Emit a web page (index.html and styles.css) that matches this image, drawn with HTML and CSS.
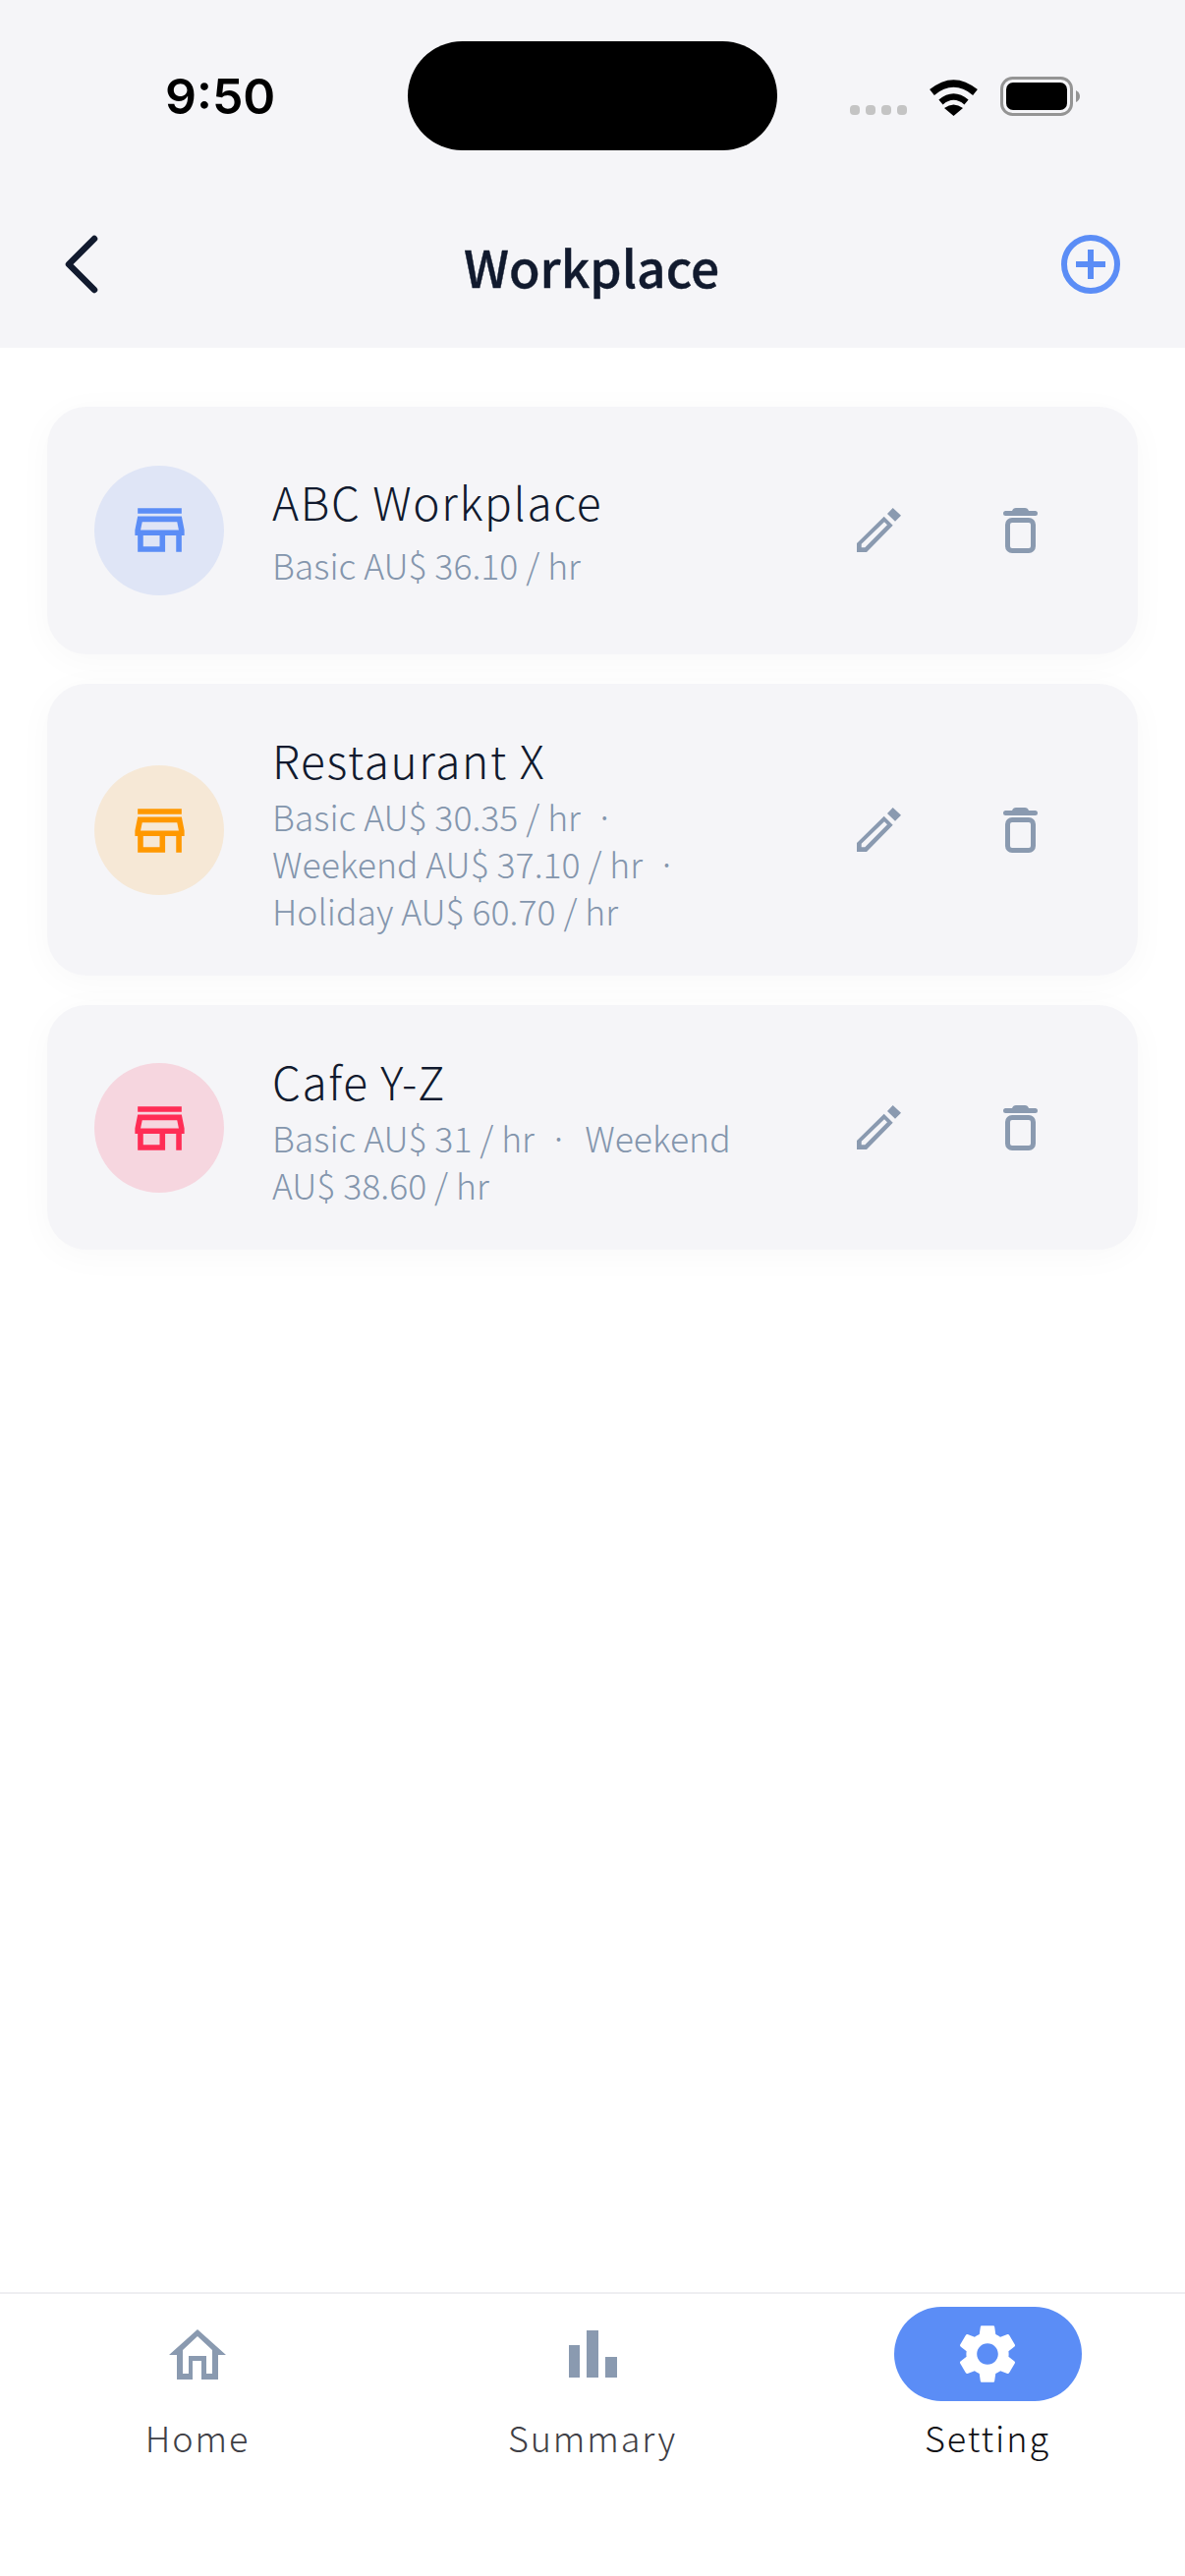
FILE: index.html
```html
<!DOCTYPE html>
<html lang="en">
<head>
  <meta charset="UTF-8" />
  <meta name="viewport" content="width=device-width, initial-scale=1.0" />
  <title>Workplace</title>
  <link rel="stylesheet" href="styles.css">
</head>
<body>
  <div id="app">
    <header id="top">
      <div id="status">
        <span class="time">9:50</span>
        <div class="island"></div>
        <div class="status-icons">
          <div class="signal"><i></i><i></i><i></i><i></i></div>
          <svg class="wifi" width="51" height="38" viewBox="0 0 51 38">
            <path d="M3.5 14 Q25.5 -4 47.5 14" fill="none" stroke="#000" stroke-width="7.5"/>
            <path d="M12.5 24 Q25.5 13 38.5 24" fill="none" stroke="#000" stroke-width="6.5"/>
            <path d="M25.5 38 L16 30 Q25.5 23 35 30 Z" fill="#000"/>
          </svg>
          <svg class="battery" width="82" height="40" viewBox="0 0 82 40">
            <rect x="1.5" y="1.5" width="71" height="37" rx="11" fill="none" stroke="#949494" stroke-width="3"/>
            <rect x="6" y="6" width="62" height="28" rx="7" fill="#000"/>
            <path d="M77 14 Q81 16 81 20 Q81 24 77 26 Z" fill="#949494"/>
          </svg>
        </div>
      </div>
      <div id="navbar">
        <div class="nav-side">
          <svg width="36" height="60" viewBox="0 0 36 60">
            <path d="M32 4 L6 30 L32 56" fill="none" stroke="#111a2e" stroke-width="6.5" stroke-linecap="round" stroke-linejoin="round"/>
          </svg>
        </div>
        <h1>Workplace</h1>
        <div class="nav-side right">
          <svg width="60" height="60" viewBox="0 0 60 60">
            <circle cx="30" cy="30" r="27" fill="none" stroke="#5b8df6" stroke-width="6"/>
            <path d="M30 15 V45 M15 30 H45" stroke="#5b8df6" stroke-width="6"/>
          </svg>
        </div>
      </div>
    </header>

    <main id="list">
      <div class="card single">
        <div class="badge blue">
          <svg width="67" height="67" viewBox="0 0 24 24"><path d="M20 4H4v2h16V4zm1 10v-2l-1-5H4l-1 5v2h1v6h10v-6h4v6h2v-6h1zm-9 4H6v-4h6v4zm-6.96-6l.6-3h12.72l.6 3H5.04z"/></svg>
        </div>
        <div class="info">
          <div class="name">ABC Workplace</div>
          <div class="rates">Basic AU$ 36.10 / hr</div>
        </div>
        <div class="actions">
          <button class="act"><svg width="45" height="46" viewBox="0 0 45 46"><path fill-rule="evenodd" d="M36.7 0 L45 7.7 L39 13.7 L31 6 Z M27.7 8.7 L36.7 17.7 L10 45 H0 V36 Z M28 14.3 L4.7 36.7 V40.3 H8.3 L31 17.3 Z"/></svg></button>
          <button class="act"><svg width="35" height="46" viewBox="0 0 35 46"><path d="M9 3 Q10 0 13 0 H22 Q25 0 26 3 H32.500 A2.500 2.500 0 0 1 32.500 8 H2.500 A2.500 2.500 0 0 1 2.500 3 Z"/><rect x="4.500" y="12.500" width="26" height="31" rx="4.500" fill="none" stroke="#8a9ab0" stroke-width="5"/></svg></button>
        </div>
      </div>

      <div class="card">
        <div class="badge orange">
          <svg width="67" height="67" viewBox="0 0 24 24"><path d="M20 4H4v2h16V4zm1 10v-2l-1-5H4l-1 5v2h1v6h10v-6h4v6h2v-6h1zm-9 4H6v-4h6v4zm-6.96-6l.6-3h12.72l.6 3H5.04z"/></svg>
        </div>
        <div class="info">
          <div class="name">Restaurant X</div>
          <div class="rates">Basic AU$ 30.35 / hr<span class="dot">·</span><br>Weekend AU$ 37.10 / hr<span class="dot">·</span><br>Holiday AU$ 60.70 / hr</div>
        </div>
        <div class="actions">
          <button class="act"><svg width="45" height="46" viewBox="0 0 45 46"><path fill-rule="evenodd" d="M36.7 0 L45 7.7 L39 13.7 L31 6 Z M27.7 8.7 L36.7 17.7 L10 45 H0 V36 Z M28 14.3 L4.7 36.7 V40.3 H8.3 L31 17.3 Z"/></svg></button>
          <button class="act"><svg width="35" height="46" viewBox="0 0 35 46"><path d="M9 3 Q10 0 13 0 H22 Q25 0 26 3 H32.500 A2.500 2.500 0 0 1 32.500 8 H2.500 A2.500 2.500 0 0 1 2.500 3 Z"/><rect x="4.500" y="12.500" width="26" height="31" rx="4.500" fill="none" stroke="#8a9ab0" stroke-width="5"/></svg></button>
        </div>
      </div>

      <div class="card">
        <div class="badge red">
          <svg width="67" height="67" viewBox="0 0 24 24"><path d="M20 4H4v2h16V4zm1 10v-2l-1-5H4l-1 5v2h1v6h10v-6h4v6h2v-6h1zm-9 4H6v-4h6v4zm-6.96-6l.6-3h12.72l.6 3H5.04z"/></svg>
        </div>
        <div class="info">
          <div class="name">Cafe Y-Z</div>
          <div class="rates">Basic AU$ 31 / hr<span class="dot">·</span>Weekend<br>AU$ 38.60 / hr</div>
        </div>
        <div class="actions">
          <button class="act"><svg width="45" height="46" viewBox="0 0 45 46"><path fill-rule="evenodd" d="M36.7 0 L45 7.7 L39 13.7 L31 6 Z M27.7 8.7 L36.7 17.7 L10 45 H0 V36 Z M28 14.3 L4.7 36.7 V40.3 H8.3 L31 17.3 Z"/></svg></button>
          <button class="act"><svg width="35" height="46" viewBox="0 0 35 46"><path d="M9 3 Q10 0 13 0 H22 Q25 0 26 3 H32.500 A2.500 2.500 0 0 1 32.500 8 H2.500 A2.500 2.500 0 0 1 2.500 3 Z"/><rect x="4.500" y="12.500" width="26" height="31" rx="4.500" fill="none" stroke="#8a9ab0" stroke-width="5"/></svg></button>
        </div>
      </div>
    </main>

    <nav id="tabs">
      <div class="tab">
        <div class="tab-icon">
          <svg width="58" height="51" viewBox="0 0 58 51"><path fill="#8a9ab0" fill-rule="evenodd" d="M29 0 L58 26 H50 V51 H33 V32 H24 V51 H8 V26 H0 Z M29 7 L14 21 V45 H20 V27 H38 V45 H44 V21 Z"/></svg>
        </div>
        <span class="label">Home</span>
      </div>
      <div class="tab">
        <div class="tab-icon">
          <div class="bars"><i class="b1"></i><i class="b2"></i><i class="b3"></i></div>
        </div>
        <span class="label">Summary</span>
      </div>
      <div class="tab active">
        <div class="tab-icon">
          <svg width="72" height="72" viewBox="0 0 24 24"><path fill="#fff" d="M19.14,12.94c0.04-0.3,0.06-0.61,0.06-0.94c0-0.32-0.02-0.64-0.07-0.94l2.03-1.58c0.18-0.14,0.23-0.41,0.12-0.61 l-1.92-3.32c-0.12-0.22-0.37-0.29-0.59-0.22l-2.39,0.96c-0.5-0.38-1.03-0.7-1.62-0.94L14.4,2.81c-0.04-0.24-0.24-0.41-0.48-0.41 h-3.84c-0.24,0-0.43,0.17-0.47,0.41L9.25,5.35C8.66,5.59,8.12,5.92,7.63,6.29L5.24,5.33c-0.22-0.08-0.47,0-0.59,0.22L2.74,8.87 C2.62,9.08,2.66,9.34,2.86,9.48l2.03,1.58C4.84,11.36,4.8,11.69,4.8,12s0.02,0.64,0.07,0.94l-2.03,1.58 c-0.18,0.14-0.23,0.41-0.12,0.61l1.92,3.32c0.12,0.22,0.37,0.29,0.59,0.22l2.39-0.96c0.5,0.38,1.03,0.7,1.62,0.94l0.36,2.54 c0.05,0.24,0.24,0.41,0.48,0.41h3.84c0.24,0,0.44-0.17,0.47-0.41l0.36-2.54c0.59-0.24,1.13-0.56,1.62-0.94l2.39,0.96 c0.22,0.08,0.47,0,0.59-0.22l1.92-3.32c0.12-0.22,0.07-0.47-0.12-0.61L19.14,12.94z M12,15.6c-1.98,0-3.6-1.62-3.6-3.6 s1.62-3.6,3.6-3.6s3.6,1.62,3.6,3.6S13.98,15.6,12,15.6z"/></svg>
        </div>
        <span class="label">Setting</span>
      </div>
    </nav>
  </div>
</body>
</html>
```

FILE: styles.css
```css
body {
  margin: 0;
  padding: 0;
  background: #fff;
  font-family: "Noto Sans CJK JP", "Noto Sans", sans-serif;
}

#app {
  display: flex;
  flex-direction: column;
  height: 2622px;
  overflow: hidden;
}

/* top area */
#top {
  background: #f5f5f8;
  height: 354px;
}

#status {
  display: flex;
  align-items: center;
  height: 111px;
  padding-top: 42px;
}

.time {
  width: 109px;
  margin-left: 168px;
  margin-right: 138px;
  font-family: Inter, sans-serif;
  font-size: 50px;
  font-weight: 600;
  line-height: 60px;
  color: #000;
  white-space: nowrap;
}

.island {
  width: 376px;
  height: 111px;
  background: #000;
  border-radius: 56px;
}

.status-icons {
  display: flex;
  align-items: flex-end;
  margin-left: 74px;
  margin-top: 1px;
}

.signal {
  display: flex;
  gap: 6px;
  margin-right: 22px;
  margin-bottom: 1px;
}

.signal i {
  width: 10px;
  height: 10px;
  border-radius: 4px;
  background: #c4c4c4;
}

.wifi {
  margin-right: 22px;
}

#navbar {
  display: flex;
  align-items: center;
  justify-content: space-between;
  height: 60px;
  margin-top: 86px;
  padding: 0 66px 0 64px;
}

.nav-side {
  display: flex;
  width: 80px;
}

.nav-side.right {
  justify-content: flex-end;
}

#navbar h1 {
  margin: 4px 0 0 0;
  font-size: 51.5px;
  font-weight: 500;
  line-height: 60px;
  color: #111a2e;
  -webkit-text-stroke: 0.4px #111a2e;
}

/* cards */
#list {
  flex: 1;
  display: flex;
  flex-direction: column;
  gap: 30px;
  padding: 60px 48px 0;
}

.card {
  display: flex;
  align-items: center;
  padding: 45px 84px 44px 48px;
  background: #f5f5f8;
  border-radius: 40px;
  box-shadow: 0 6px 36px rgba(0, 0, 0, 0.03);
}

.card.single {
  min-height: 252px;
  padding-top: 44px;
  padding-bottom: 45px;
  box-sizing: border-box;
}

.badge {
  flex: none;
  display: flex;
  align-items: center;
  justify-content: center;
  width: 132px;
  height: 132px;
  border-radius: 50%;
}

.badge.blue { background: #dfe5f6; fill: #5b8df6; }
.badge.orange { background: #f6e8d6; fill: #ff9800; }
.badge.red { background: #f6d6df; fill: #ff2d55; }

.info {
  width: 490px;
  margin-left: 49px;
  margin-right: auto;
}

.name {
  margin-top: 2px;
  font-size: 46px;
  font-weight: 300;
  line-height: 60px;
  letter-spacing: 1.65px;
  color: #111a2e;
}

.rates {
  margin-top: 4px;
  margin-bottom: -2px;
  font-size: 35.6px;
  font-weight: 300;
  line-height: 48px;
  color: #8496ad;
}

.single .info {
  margin-bottom: 4px;
}

.single .rates {
  margin-top: 11px;
}

.dot {
  margin: 0 17px 0 15px;
}

.actions {
  display: flex;
  gap: 72px;
}

.act {
  display: flex;
  align-items: center;
  justify-content: center;
  width: 72px;
  height: 72px;
  padding: 0;
  border: none;
  background: none;
  fill: #8a9ab0;
}

/* bottom tabs */
#tabs {
  display: grid;
  grid-template-columns: repeat(3, 1fr);
  height: 289px;
  padding-top: 13px;
  box-sizing: border-box;
  border-top: 2px solid #eeeef1;
}

.tab {
  display: flex;
  flex-direction: column;
  align-items: center;
}

.tab-icon {
  display: flex;
  align-items: center;
  justify-content: center;
  width: 191px;
  height: 96px;
  border-radius: 48px;
}

.tab.active .tab-icon {
  background: #5b8df6;
}

.label {
  margin-top: 8px;
  font-size: 36px;
  font-weight: 300;
  line-height: 56px;
  letter-spacing: 1.9px;
  color: #3f3f46;
}

.tab.active .label {
  color: #111116;
}

.bars {
  display: flex;
  align-items: flex-end;
  gap: 7px;
  height: 48px;
}

.bars i {
  width: 11px;
  background: #8a9ab0;
}

.bars .b1 { height: 33px; }
.bars .b2 { height: 48px; width: 12px; }
.bars .b3 { height: 21px; width: 12px; }
```
